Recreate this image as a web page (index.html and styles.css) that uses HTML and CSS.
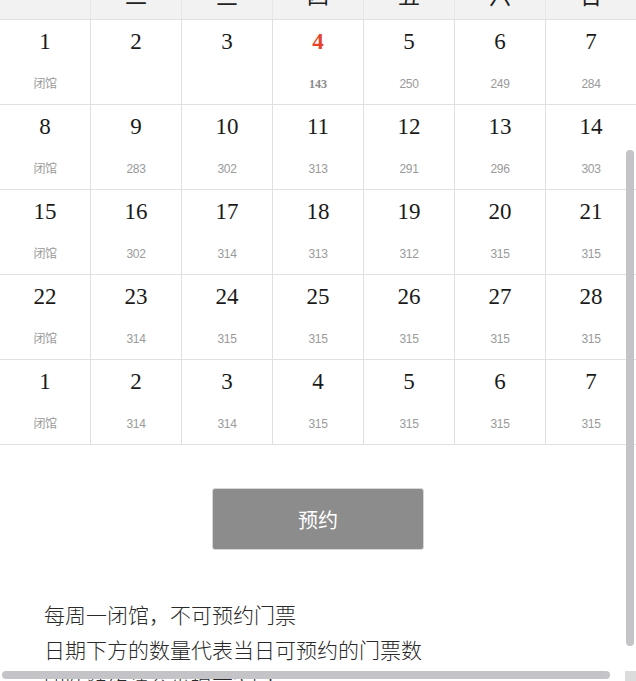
FILE: index.html
```html
<!DOCTYPE html>
<html lang="zh">
<head>
<meta charset="utf-8">
<link rel="stylesheet" href="styles.css">
</head>
<body>
<div class="page">
  <div class="calendar">
    <div class="head">一</div><div class="head">二</div><div class="head">三</div><div class="head">四</div><div class="head">五</div><div class="head">六</div><div class="head">日</div>

    <div class="cell"><span class="day">1</span><span class="info">闭馆</span></div>
    <div class="cell"><span class="day">2</span><span class="info"></span></div>
    <div class="cell"><span class="day">3</span><span class="info"></span></div>
    <div class="cell today"><span class="day">4</span><span class="info">143</span></div>
    <div class="cell"><span class="day">5</span><span class="info">250</span></div>
    <div class="cell"><span class="day">6</span><span class="info">249</span></div>
    <div class="cell"><span class="day">7</span><span class="info">284</span></div>

    <div class="cell"><span class="day">8</span><span class="info">闭馆</span></div>
    <div class="cell"><span class="day">9</span><span class="info">283</span></div>
    <div class="cell"><span class="day">10</span><span class="info">302</span></div>
    <div class="cell"><span class="day">11</span><span class="info">313</span></div>
    <div class="cell"><span class="day">12</span><span class="info">291</span></div>
    <div class="cell"><span class="day">13</span><span class="info">296</span></div>
    <div class="cell"><span class="day">14</span><span class="info">303</span></div>

    <div class="cell"><span class="day">15</span><span class="info">闭馆</span></div>
    <div class="cell"><span class="day">16</span><span class="info">302</span></div>
    <div class="cell"><span class="day">17</span><span class="info">314</span></div>
    <div class="cell"><span class="day">18</span><span class="info">313</span></div>
    <div class="cell"><span class="day">19</span><span class="info">312</span></div>
    <div class="cell"><span class="day">20</span><span class="info">315</span></div>
    <div class="cell"><span class="day">21</span><span class="info">315</span></div>

    <div class="cell"><span class="day">22</span><span class="info">闭馆</span></div>
    <div class="cell"><span class="day">23</span><span class="info">314</span></div>
    <div class="cell"><span class="day">24</span><span class="info">315</span></div>
    <div class="cell"><span class="day">25</span><span class="info">315</span></div>
    <div class="cell"><span class="day">26</span><span class="info">315</span></div>
    <div class="cell"><span class="day">27</span><span class="info">315</span></div>
    <div class="cell"><span class="day">28</span><span class="info">315</span></div>

    <div class="cell"><span class="day">1</span><span class="info">闭馆</span></div>
    <div class="cell"><span class="day">2</span><span class="info">314</span></div>
    <div class="cell"><span class="day">3</span><span class="info">314</span></div>
    <div class="cell"><span class="day">4</span><span class="info">315</span></div>
    <div class="cell"><span class="day">5</span><span class="info">315</span></div>
    <div class="cell"><span class="day">6</span><span class="info">315</span></div>
    <div class="cell"><span class="day">7</span><span class="info">315</span></div>
  </div>

  <div class="actions">
    <button class="btn" type="button">预约</button>
  </div>

  <div class="notes">
    <p>每周一闭馆，不可预约门票</p>
    <p>日期下方的数量代表当日可预约的门票数</p>
    <p>团队预约请至少提前3天！</p>
  </div>
</div>
<div class="scroll-v"></div>
<div class="scroll-h"></div>
<div class="scroll-corner"></div>
</body>
</html>
```

FILE: styles.css
```css
html, body {
  margin: 0;
  padding: 0;
  overflow: hidden;
  background: #fff;
}
body {
  width: 636px;
  height: 681px;
  position: relative;
  font-family: "Noto Sans CJK SC", sans-serif;
}
.page {
  width: 637px;
  margin-top: -21px;
}
.calendar {
  display: grid;
  grid-template-columns: repeat(7, 91px);
}
.head {
  height: 30px;
  line-height: 30px;
  padding-bottom: 10px;
  background: #f2f2f2;
  border-bottom: 1px solid #e0e0e0;
  border-right: 1px solid #e6e6e6;
  text-align: center;
  font-size: 22px;
  color: #222;
  font-family: "Noto Sans CJK SC", serif;
}
.cell {
  height: 84px;
  border-right: 1px solid #e0e0e0;
  border-bottom: 1px solid #e0e0e0;
  display: flex;
  flex-direction: column;
  align-items: center;
}
.day {
  margin-top: 10px;
  height: 24px;
  line-height: 24px;
  font-family: "Liberation Serif", serif;
  font-size: 23px;
  color: #1a1a1a;
}
.info {
  margin-top: 22px;
  height: 16px;
  line-height: 16px;
  font-family: "Liberation Sans", "Noto Sans CJK SC", sans-serif;
  font-size: 12px;
  letter-spacing: -0.4px;
  color: #9a9a9a;
}
.today .day {
  color: #e8432a;
  font-weight: bold;
}
.today .info {
  font-family: "Liberation Serif", serif;
  font-weight: bold;
  color: #8a8a8a;
  letter-spacing: 0;
}
.actions {
  display: flex;
  justify-content: center;
  padding-top: 43px;
  width: 636px;
}
.btn {
  width: 212px;
  height: 62px;
  background: #8c8c8c;
  border: 1px solid #d6d6d6;
  border-radius: 3px;
  color: #fff;
  font-family: "Noto Sans CJK SC", sans-serif;
  font-size: 20px;
  padding: 0;
}
.notes {
  padding: 47px 0 0 44px;
}
.notes p {
  margin: 0;
  height: 35px;
  line-height: 35px;
  font-size: 21px;
  color: #2a2a2a;
  font-weight: 300;
}
.scroll-v {
  position: absolute;
  left: 626px;
  top: 150px;
  width: 8px;
  height: 496px;
  border-radius: 4px;
  background: #c3c3c8;
}
.scroll-h {
  position: absolute;
  left: 2px;
  top: 671px;
  width: 608px;
  height: 8px;
  border-radius: 4px;
  background: #c3c3c8;
}
.scroll-corner {
  position: absolute;
  left: 625px;
  top: 671px;
  width: 11px;
  height: 10px;
  background: #dcdcdc;
}
```
